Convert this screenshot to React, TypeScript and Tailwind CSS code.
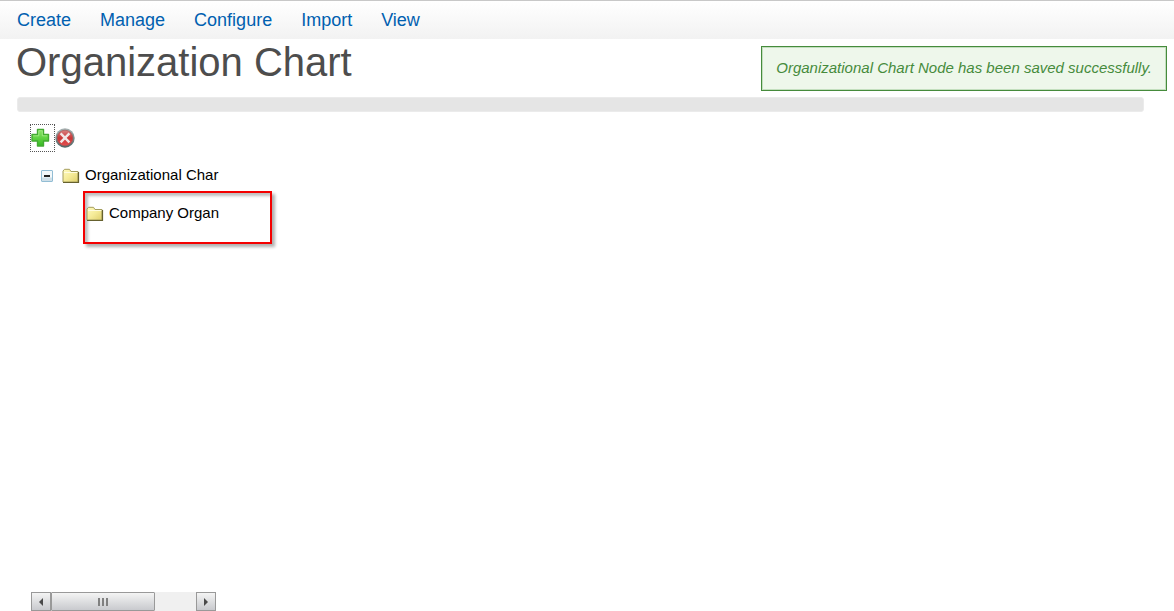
const menu = ["Create", "Manage", "Configure", "Import", "View"];

function PlusIcon() {
  return (
    <svg width="20" height="20" viewBox="0 0 20 20" className="shrink-0" aria-hidden="true">
      <defs>
        <linearGradient id="plus" x1="0" y1="0" x2="0" y2="1">
          <stop offset="0" stopColor="#8be268" />
          <stop offset="0.5" stopColor="#62d344" />
          <stop offset="1" stopColor="#35b822" />
        </linearGradient>
      </defs>
      <path d="M7.5 1.5h6v5h5v6.5h-5v5h-6v-5h-5.5v-6.5h5.5z" fill="url(#plus)" stroke="#43aa32" strokeWidth="1.4" strokeLinejoin="round" />
      <path d="M8.8 7.8V2.7h3.5v5.1h5M3.2 7.8h5.6" fill="none" stroke="#a5ec88" strokeWidth="0.8" />
    </svg>
  );
}

function DeleteIcon() {
  return (
    <svg width="20" height="20" viewBox="0 0 20 20" aria-hidden="true">
      <defs>
        <linearGradient id="rim" x1="0" y1="0" x2="0" y2="1">
          <stop offset="0" stopColor="#a9b3b3" />
          <stop offset="1" stopColor="#4f6565" />
        </linearGradient>
        <linearGradient id="red" x1="0" y1="0" x2="0" y2="1">
          <stop offset="0" stopColor="#d88080" />
          <stop offset="0.5" stopColor="#cb3636" />
          <stop offset="1" stopColor="#e45050" />
        </linearGradient>
      </defs>
      <circle cx="10" cy="10" r="9.7" fill="url(#rim)" />
      <circle cx="10" cy="10" r="7.8" fill="url(#red)" stroke="#a85050" strokeWidth="0.6" />
      <path d="M5.6 5.4l8.8 9M14.4 5.4l-8.8 9" stroke="#f1e6e6" strokeWidth="2.4" />
    </svg>
  );
}

function FolderIcon() {
  return (
    <svg width="18" height="16" viewBox="0 0 18 16" className="shrink-0" aria-hidden="true">
      <defs>
        <linearGradient id="folder" x1="0" y1="0" x2="1" y2="1">
          <stop offset="0" stopColor="#fffbc0" />
          <stop offset="0.5" stopColor="#f5eb98" />
          <stop offset="1" stopColor="#dfcf6c" />
        </linearGradient>
      </defs>
      <path d="M1 14V3l1.5-1.7h5L9 3.5h7V14z" fill="url(#folder)" stroke="#a39c5c" />
      <path d="M2 4.5h13.5" stroke="#fffce0" />
      <path d="M1 14.5h15.5V4" fill="none" stroke="#66612f" strokeWidth="1.2" />
    </svg>
  );
}

function CollapseIcon() {
  return (
    <svg width="12" height="12" viewBox="0 0 12 12" aria-hidden="true">
      <rect x="0.5" y="0.5" width="11" height="11" rx="0.5" fill="#f3f8fa" stroke="#92bdd4" />
      <rect x="1" y="7.5" width="10" height="3.5" fill="#cfdfe8" />
      <path d="M3 6h6" stroke="#222" strokeWidth="2" />
    </svg>
  );
}

function ArrowIcon({ left = false }: { left?: boolean }) {
  return (
    <svg width="6" height="8" viewBox="0 0 6 8" aria-hidden="true">
      <path d={left ? "M5 0v8L1 4z" : "M1 0v8l4-4z"} fill="#4a4a4a" />
    </svg>
  );
}

function ScrollBar() {
  const part = "flex items-center justify-center border border-[#999] bg-linear-to-b from-[#f4f4f4] to-[#c9cace]";
  return (
    <div className="ml-[31px] flex h-[19px] w-[185px] bg-[#f0f0f0]">
      <button type="button" aria-label="Scroll left" className={`${part} w-5`}>
        <ArrowIcon left />
      </button>
      <div className={`${part} w-[104px] gap-[2px] rounded-[1px]`}>
        <span className="h-2 w-[2px] bg-[#808080]" />
        <span className="h-2 w-[2px] bg-[#808080]" />
        <span className="h-2 w-[2px] bg-[#808080]" />
      </div>
      <button type="button" aria-label="Scroll right" className={`${part} ml-auto w-5`}>
        <ArrowIcon />
      </button>
    </div>
  );
}

export default function App() {
  return (
    <div className="flex min-h-screen flex-col bg-white font-['Liberation_Sans',Arial,sans-serif] text-black">
      <nav className="flex h-[39px] items-center gap-[29px] border-t border-[#c8c8c8] bg-linear-to-b from-white to-[#f2f2f2] px-[17px] text-[18px] leading-5 text-[#0060b0]">
        {menu.map((item) => (
          <a key={item} href="#">
            {item}
          </a>
        ))}
      </nav>

      <header className="flex min-h-[58px] items-start justify-between pr-[7px] pl-4">
        <h1 className="text-[40px] leading-[46px] text-[#4d4d4d]">Organization Chart</h1>
        <p role="status" className="mt-[7px] border border-[#468b3c] bg-[#eef7eb] px-[14px] pt-3 pb-[13px] text-[15px] leading-[18px] text-[#468b3c] italic shadow-[inset_0_0_0_1px_#c3dfbe]">
          Organizational Chart Node has been saved successfully.
        </p>
      </header>

      <div className="mr-[30px] ml-[17px] h-[15px] rounded-[3px] border border-[#ebebeb] bg-[#e5e5e5]" />

      <main className="flex flex-1 flex-col">
        <div className="mt-3 ml-[30px] flex items-start">
          <button type="button" aria-label="Add node" className="flex h-7 w-[25px] items-center outline-1 -outline-offset-1 outline-dotted outline-[#555]">
            <PlusIcon />
          </button>
          <button type="button" aria-label="Delete node" className="mt-1">
            <DeleteIcon />
          </button>
        </div>

        <ul className="mt-[11px] ml-[41px] flex-1 text-[15px] leading-[18px]">
          <li>
            <div className="flex h-7 items-start pt-[3px]">
              <button type="button" aria-label="Collapse" className="flex h-5 items-center">
                <CollapseIcon />
              </button>
              <span className="ml-2 flex items-center gap-[5px] pl-px whitespace-nowrap">
                <FolderIcon />
                <span className="pb-[2px]">Organizational Char</span>
              </span>
            </div>
            <ul className="ml-[42px]">
              <li className="h-[53px] w-[189px] border-2 border-[#f40000] pt-[11px] shadow-[3px_3px_3px_#00000050,inset_3px_3px_3px_#00000040]">
                <span className="flex items-center gap-[5px] pl-px whitespace-nowrap">
                  <FolderIcon />
                  <span className="pb-[2px]">Company Organ</span>
                </span>
              </li>
            </ul>
          </li>
        </ul>

        <ScrollBar />
      </main>
    </div>
  );
}
